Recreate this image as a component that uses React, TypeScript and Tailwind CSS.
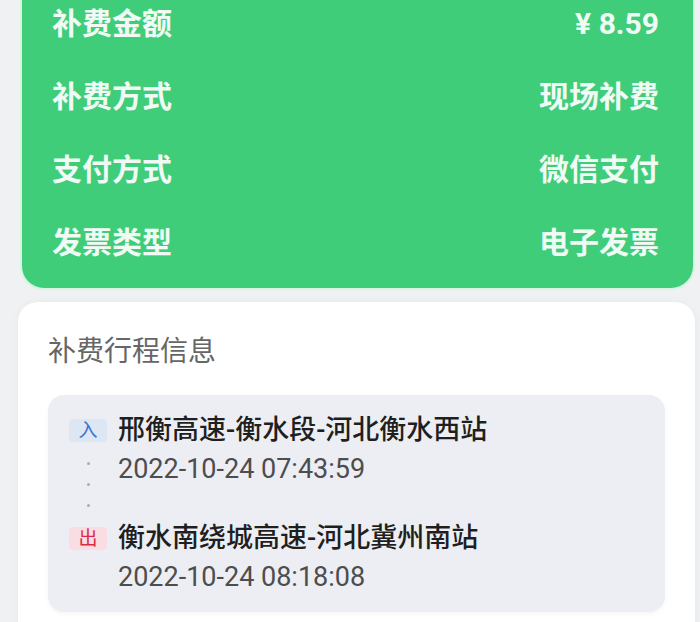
const summary = [
  { label: "补费金额", value: "¥ 8.59" },
  { label: "补费方式", value: "现场补费" },
  { label: "支付方式", value: "微信支付" },
  { label: "发票类型", value: "电子发票" },
];

const Badge = ({ text, tone }: { text: string; tone: "in" | "out" }) => (
  <span
    className={
      tone === "in"
        ? "flex h-[23px] w-[38px] items-center justify-center rounded-[4px] bg-[#dde6f3] text-[19px] leading-none text-[#3574cf]"
        : "flex h-[23px] w-[38px] items-center justify-center rounded-[4px] bg-[#fadde2] text-[19px] leading-none text-[#d42f47]"
    }
  >
    {text}
  </span>
);

export default function App() {
  return (
    <div className="h-[622px] w-[700px] overflow-hidden bg-[#eff1f2] font-['Roboto','Noto_Sans_CJK_SC',sans-serif]">
      <div className="-mt-[13px] ml-[22px] mr-[7px] rounded-b-[22px] bg-[#3fcd7a] px-[30px] pb-[9px] shadow-[0_0_0_2px_#d6f4e2]">
        {summary.map((row) => (
          <div key={row.label} className="flex h-[73px] items-center justify-between text-[30px] font-bold leading-none text-[#f1fbf5]">
            <span>{row.label}</span>
            <span className="mr-[4px]">{row.value}</span>
          </div>
        ))}
      </div>

      <div className="ml-[18px] mr-[5px] mt-[14px] rounded-t-[20px] bg-white px-[30px] pb-[20px] pt-[36px] shadow-[0_0_8px_rgba(0,0,0,0.04)]">
        <h3 className="mb-[29px] text-[28px] leading-[28px] text-[#666]">补费行程信息</h3>

        <div className="rounded-[16px] bg-[#eceef3] pb-[15px] pl-[20px] pt-[16px] shadow-[0_2px_4px_rgba(0,0,0,0.04)]">
          <div className="flex gap-[10px]">
            <div className="flex w-[40px] flex-col items-center">
              <div className="flex h-[38px] items-center">
                <Badge text="入" tone="in" />
              </div>
              <div className="flex h-[70px] flex-col items-center justify-center gap-[18px]">
                <span className="h-[3px] w-[3px] rounded-full bg-[#a9acb2]" />
                <span className="h-[3px] w-[3px] rounded-full bg-[#a9acb2]" />
                <span className="h-[3px] w-[3px] rounded-full bg-[#a9acb2]" />
              </div>
              <div className="flex h-[38px] items-center">
                <Badge text="出" tone="out" />
              </div>
            </div>

            <div className="flex flex-col">
              <div className="h-[38px] text-[27px] font-medium leading-[38px] text-[#1f1f1f]">邢衡高速-衡水段-河北衡水西站</div>
              <div className="h-[40px] text-[27px] leading-[40px] text-[#4d4d4f]">2022-10-24 07:43:59</div>
              <div className="mt-[30px] h-[38px] text-[27px] font-medium leading-[38px] text-[#1f1f1f]">衡水南绕城高速-河北冀州南站</div>
              <div className="h-[40px] text-[27px] leading-[40px] text-[#4d4d4f]">2022-10-24 08:18:08</div>
            </div>
          </div>
        </div>
      </div>
    </div>
  );
}
